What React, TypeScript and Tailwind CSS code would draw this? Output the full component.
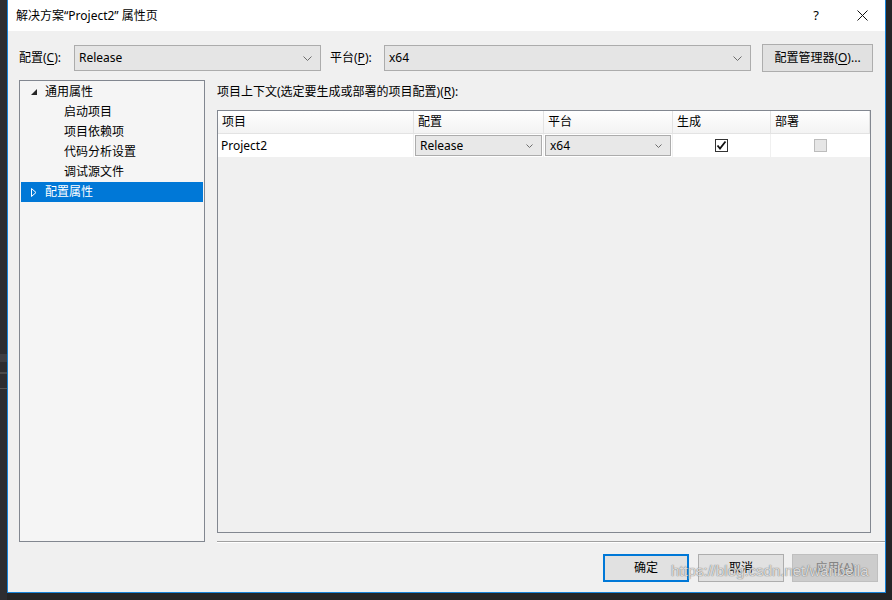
import React from 'react';

const font = "font-['Noto_Sans','Noto_Sans_CJK_SC',sans-serif]";

// 下拉箭头
const Chevron: React.FC<{ small?: boolean }> = ({ small }) => (
  <svg width={small ? 7 : 9} height={small ? 4 : 5} viewBox={small ? '0 0 7 4' : '0 0 9 5'} className="shrink-0">
    <polyline
      points={small ? '0.5,0.5 3.5,3.5 6.5,0.5' : '0.5,0.5 4.5,4.5 8.5,0.5'}
      fill="none"
      stroke="#6d6d6d"
      strokeWidth="1"
    />
  </svg>
);

const Combo: React.FC<{ value: string; className: string }> = ({ value, className }) => (
  <div className={`flex items-center justify-between bg-[#e5e5e5] border border-[#acacac] pl-[4px] pr-[8px] ${className}`}>
    <span className="leading-none">{value}</span>
    <Chevron />
  </div>
);

const CellCombo: React.FC<{ value: string }> = ({ value }) => (
  <div className="flex items-center justify-between h-[21px] bg-[#e8e8e8] border border-[#acacac] pl-[4px] pr-[8px] mx-[1px]">
    <span className="leading-none">{value}</span>
    <Chevron small />
  </div>
);

const U: React.FC<{ children: React.ReactNode }> = ({ children }) => (
  <span className="underline underline-offset-2">{children}</span>
);

const treeChildren = ['启动项目', '项目依赖项', '代码分析设置', '调试源文件'];

const columns = [
  { name: '项目', w: 'w-[196px]' },
  { name: '配置', w: 'w-[130px]' },
  { name: '平台', w: 'w-[129px]' },
  { name: '生成', w: 'w-[98px]' },
  { name: '部署', w: 'flex-1' },
];

export default function App() {
  return (
    <div className={`relative w-[892px] h-[600px] bg-[#252526] flex text-[12px] text-black ${font}`}>
      {/* 左侧IDE背景 */}
      <div className="w-[7px] flex flex-col bg-[#2d2d30]">
        <div className="h-[354px]" />
        <div className="h-[8px] bg-[#3e3e42]" />
        <div className="h-[10px]" />
        <div className="h-[2px] bg-[#4a4a4a]" />
        <div className="h-[14px]" />
        <div className="h-[1px] bg-[#555]" />
      </div>

      {/* 对话框 */}
      <div className="w-[879px] h-[593px] border-x border-b border-[#1883d7] flex flex-col bg-[#f0f0f0]">
        {/* 标题栏 */}
        <div className="h-[31px] bg-white flex items-center shrink-0">
          <span className="pl-[8px]">解决方案“Project2” 属性页</span>
          <div className="ml-auto flex h-full">
            <div className="w-[46px] flex items-center justify-center text-[13px]">?</div>
            <div className="w-[46px] flex items-center justify-center">
              <svg width="11" height="11" viewBox="0 0 11 11">
                <path d="M0.5 0.5 L10.5 10.5 M10.5 0.5 L0.5 10.5" stroke="#111" strokeWidth="1" />
              </svg>
            </div>
          </div>
        </div>

        {/* 配置 / 平台 */}
        <div className="flex items-center h-[28px] mt-[13px] pl-[11px]">
          <span className="w-[55px]">
            配置(<U>C</U>):
          </span>
          <Combo value="Release" className="w-[247px] h-[26px]" />
          <span className="w-[54px] ml-[9px]">
            平台(<U>P</U>):
          </span>
          <Combo value="x64" className="w-[367px] h-[26px]" />
          <button className="ml-[11px] w-[111px] h-[28px] bg-[#e1e1e1] border border-[#adadad]">
            配置管理器(<U>O</U>)...
          </button>
        </div>

        {/* 主体 */}
        <div className="flex mt-[8px]">
          {/* 树 */}
          <div className="ml-[11px] w-[186px] h-[462px] border border-[#828790] bg-[#f5f5f5] pt-[1px] px-[1px]">
            <div className="h-[20px] flex items-center pl-[10px]">
              <svg width="6" height="6" viewBox="0 0 6 6" className="mr-[8px]">
                <polygon points="6,0 6,6 0,6" fill="#262626" />
              </svg>
              <span>通用属性</span>
            </div>
            {treeChildren.map((t) => (
              <div key={t} className="h-[20px] flex items-center pl-[43px]">
                {t}
              </div>
            ))}
            <div className="h-[20px] flex items-center pl-[10px] bg-[#0078d7] text-white">
              <svg width="6" height="9" viewBox="0 0 6 9" className="mr-[8px]">
                <polygon points="0.5,0.5 5,4.5 0.5,8.5" fill="none" stroke="#fff" strokeWidth="1" />
              </svg>
              <span>配置属性</span>
            </div>
          </div>

          {/* 右侧 */}
          <div className="ml-[12px] flex-1 flex flex-col">
            <div className="h-[30px] pt-[4px] leading-[16px]">
              项目上下文(选定要生成或部署的项目配置)(<U>R</U>):
            </div>
            <div className="w-[654px] h-[423px] border border-[#828790] bg-[#f0f0f0] flex flex-col">
              {/* 表头 */}
              <div className="flex h-[23px] bg-gradient-to-b from-white to-[#f3f3f3] border-b border-[#e3e3e3]">
                {columns.map((c) => (
                  <div key={c.name} className={`${c.w} flex items-center pl-[4px] border-r border-[#e3e3e3]`}>
                    {c.name}
                  </div>
                ))}
              </div>
              {/* 数据行 */}
              <div className="flex h-[23px] bg-white">
                <div className="w-[196px] flex items-center pl-[3px] border-r border-[#f0f0f0]">Project2</div>
                <div className="w-[130px] flex flex-col justify-center border-r border-[#f0f0f0]">
                  <CellCombo value="Release" />
                </div>
                <div className="w-[129px] flex flex-col justify-center border-r border-[#f0f0f0]">
                  <CellCombo value="x64" />
                </div>
                <div className="w-[98px] flex items-center justify-center border-r border-[#f0f0f0]">
                  <div className="w-[13px] h-[13px] border border-[#333] bg-white flex items-center justify-center">
                    <svg width="11" height="11" viewBox="0 0 11 11">
                      <path d="M1.5 5.5 L4 8.5 L9.5 1.5" fill="none" stroke="#111" strokeWidth="1.8" />
                    </svg>
                  </div>
                </div>
                <div className="flex-1 flex items-center justify-center">
                  <div className="w-[13px] h-[13px] border border-[#bcbcbc] bg-[#e6e6e6]" />
                </div>
              </div>
            </div>
            <div className="mt-[8px] h-[1px] bg-[#a0a0a0]" />
            <div className="h-[1px] bg-white" />
          </div>
        </div>

        {/* 底部按钮 */}
        <div className="flex justify-end mt-[11px] pr-[7px]">
          <button className="w-[86px] h-[28px] bg-[#e1e1e1] border-2 border-[#0078d7]">确定</button>
          <button className="ml-[9px] w-[86px] h-[28px] bg-[#e1e1e1] border border-[#adadad]">取消</button>
          <button className="ml-[8px] w-[86px] h-[28px] bg-[#cccccc] border border-[#bfbfbf] text-[#838383]">
            应用(<U>A</U>)
          </button>
        </div>
      </div>

      {/* 水印 */}
      <div className="absolute left-[671px] top-[560px] text-[15px] font-['Liberation_Sans',sans-serif] text-white/75 [text-shadow:0_0_1px_rgba(90,90,90,0.7),0_0_1px_rgba(90,90,90,0.7)] pointer-events-none">
        https://blog.csdn.net/wanbeila
      </div>
    </div>
  );
}
